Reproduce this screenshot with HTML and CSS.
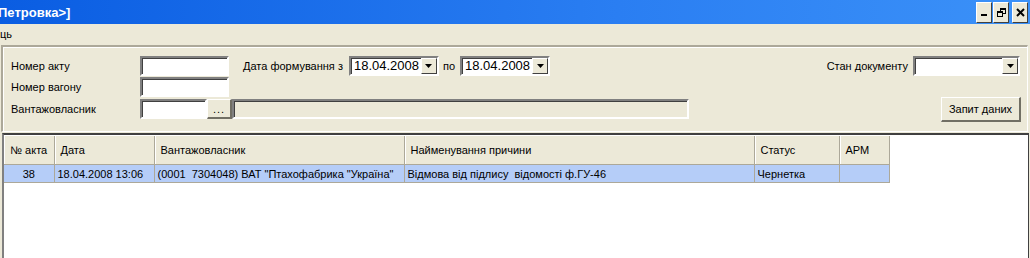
FILE: index.html
```html
<!DOCTYPE html>
<html lang="uk">
<head>
    <meta charset="UTF-8">
    <title>Петровка</title>
    <link rel="stylesheet" href="styles.css">
</head>
<body>

<div class="window">
    <!-- Title bar -->
    <div class="titlebar">
        <span class="title">Петровка&gt;]</span>
        <div class="caption-btns">
            <span class="cap-btn">
                <svg width="9" height="9" viewBox="0 0 9 9"><rect x="1" y="6" width="6" height="2" fill="#000"/></svg>
            </span>
            <span class="cap-btn">
                <svg width="9" height="9" viewBox="0 0 9 9" fill="none" stroke="#000">
                    <rect x="3.5" y="0.5" width="5" height="5"/><line x1="3" y1="1.5" x2="9" y2="1.5"/>
                    <rect x="0.5" y="3.5" width="5" height="5" fill="#ECE9D8"/><line x1="0" y1="4.5" x2="6" y2="4.5"/>
                </svg>
            </span>
            <span class="cap-btn close">
                <svg width="9" height="9" viewBox="0 0 9 9" stroke="#000" stroke-width="2"><line x1="1" y1="1" x2="8" y2="8"/><line x1="8" y1="1" x2="1" y2="8"/></svg>
            </span>
        </div>
    </div>

    <!-- Menu -->
    <div class="menubar">ць</div>

    <!-- Filter panel -->
    <div class="filters">
        <div class="frow">
            <span class="lbl">Номер акту</span>
            <span class="edit w-act"></span>
            <span class="lbl-date">Дата формування з</span>
            <span class="combo date">18.04.2008<span class="drop"><svg width="7" height="4" viewBox="0 0 7 4"><path d="M0 0H7L3.5 4Z" fill="#000"/></svg></span></span>
            <span class="lbl-po">по</span>
            <span class="combo date">18.04.2008<span class="drop"><svg width="7" height="4" viewBox="0 0 7 4"><path d="M0 0H7L3.5 4Z" fill="#000"/></svg></span></span>
            <span class="spacer"></span>
            <span class="lbl-state">Стан документу</span>
            <span class="combo state"><span class="drop"><svg width="7" height="4" viewBox="0 0 7 4"><path d="M0 0H7L3.5 4Z" fill="#000"/></svg></span></span>
        </div>
        <div class="frow">
            <span class="lbl">Номер вагону</span>
            <span class="edit w-act"></span>
        </div>
        <div class="frow last">
            <span class="lbl">Вантажовласник</span>
            <span class="edit w-owner"></span>
            <span class="btn dots">...</span>
            <span class="edit disabled w-name"></span>
            <span class="spacer"></span>
            <span class="btn query">Запит даних</span>
        </div>
    </div>

    <!-- Result grid -->
    <div class="grid">
        <table>
            <colgroup>
                <col style="width: 50px">
                <col style="width: 100px">
                <col style="width: 250px">
                <col style="width: 350px">
                <col style="width: 85px">
                <col style="width: 50px">
            </colgroup>
            <thead>
                <tr>
                    <th class="center">№ акта</th>
                    <th>Дата</th>
                    <th>Вантажовласник</th>
                    <th>Найменування причини</th>
                    <th>Статус</th>
                    <th>АРМ</th>
                </tr>
            </thead>
            <tbody>
                <tr class="selected">
                    <td class="center">38</td>
                    <td>18.04.2008 13:06</td>
                    <td>(0001&nbsp; 7304048) ВАТ "Птахофабрика "Україна"</td>
                    <td>Відмова від підлису&nbsp; відомості ф.ГУ-46</td>
                    <td>Чернетка</td>
                    <td></td>
                </tr>
            </tbody>
        </table>
    </div>
</div>

</body>
</html>
```

FILE: styles.css
```css
/* Page */
html, body {
    margin: 0;
    padding: 0;
}

body {
    width: 1030px;
    height: 258px;
    overflow: hidden;
    background-color: #ECE9D8;
    font-family: "Liberation Sans", Arial, sans-serif;
    font-size: 11px;
    color: #000;
}

.window {
    display: flex;
    flex-direction: column;
    height: 258px;
}

/* Title bar */
.titlebar {
    height: 24px;
    display: flex;
    align-items: center;
    justify-content: space-between;
    background: linear-gradient(to right, #0A5DE2, #2A7EF2 60%, #3B91F8);
}

.title {
    color: #fff;
    font-size: 13px;
    font-weight: bold;
    margin-left: -2px;
}

.caption-btns {
    display: flex;
    align-items: center;
    padding-right: 2px;
}

.cap-btn {
    width: 14px;
    height: 19px;
    margin-left: 1px;
    display: flex;
    align-items: center;
    justify-content: center;
    background-color: #ECE9D8;
    border-style: solid;
    border-width: 1px;
    border-color: #fff #404040 #404040 #fff;
}

.cap-btn.close {
    margin-left: 3px;
}

/* Menu bar */
.menubar {
    height: 20px;
    line-height: 21px;
}

/* Filter panel */
.filters {
    margin: 1px 2px 0 1px;
    height: 76px;
    padding: 8px 0 0 8px;
    border-style: solid;
    border-width: 2px 1px 1px 2px;
    border-color: #ACA899 #fff #fff #ACA899;
    box-shadow: inset 1px 1px 0 #fff;
}

.frow {
    display: flex;
    align-items: center;
    height: 21px;
}

.frow.last {
    height: 24px;
}

.lbl {
    width: 129px;
}

.edit {
    height: 16px;
    background-color: #fff;
    border-style: solid;
    border-width: 2px;
    border-color: #808080 #fff #fff #808080;
    box-shadow: inset 1px 1px 0 #404040;
}

.w-act {
    width: 85px;
}

.w-owner {
    width: 63px;
}

.w-name {
    width: 453px;
}

.edit.disabled {
    background-color: #ECE9D8;
}

.lbl-date {
    margin-left: 14px;
    margin-right: 6px;
}

.lbl-po {
    margin: 0 5px 0 4px;
}

.lbl-state {
    margin-right: 5px;
}

/* Combo boxes */
.combo {
    height: 16px;
    display: flex;
    align-items: center;
    padding-left: 3px;
    background-color: #fff;
    border-style: solid;
    border-width: 2px;
    border-color: #808080 #fff #fff #808080;
    box-shadow: inset 1px 1px 0 #404040;
    font-size: 13px;
}

.combo.date {
    width: 83px;
}

.combo.state {
    width: 100px;
    margin-right: 7px;
}

.drop {
    width: 16px;
    height: 16px;
    margin-left: auto;
    display: flex;
    align-items: center;
    justify-content: center;
    background-color: #ECE9D8;
    border-style: solid;
    border-width: 1px;
    border-color: #fff #404040 #404040 #fff;
    box-sizing: border-box;
}

.spacer {
    flex: 1;
}

/* Buttons */
.btn {
    display: flex;
    align-items: center;
    justify-content: center;
    background-color: #ECE9D8;
    border-style: solid;
    border-width: 1px 2px 2px 1px;
    border-color: #fff #716F64 #716F64 #fff;
}

.btn.dots {
    width: 22px;
    height: 17px;
    letter-spacing: 1px;
}

.btn.query {
    width: 77px;
    height: 22px;
    margin-right: 6px;
}

/* Grid */
.grid {
    flex: 1;
    margin: 1px 1px 0 2px;
    background-color: #fff;
    border-style: solid;
    border-width: 2px 1px 0 2px;
    border-color: #404040 #404040 #404040 #808080;
}

.grid table {
    border-collapse: collapse;
    table-layout: fixed;
    width: 885px;
    margin-top: 1px;
}

.grid th {
    height: 28px;
    padding: 0 6px;
    font-weight: normal;
    text-align: left;
    background-color: #ECE9D8;
    border-right: 1px solid #ACA899;
    border-bottom: 1px solid #ACA899;
    box-shadow: inset 1px 0 0 #fff;
}

.grid td {
    height: 17px;
    padding: 0 3px;
    white-space: nowrap;
    overflow: hidden;
    border-right: 1px solid #ACA899;
    border-bottom: 1px solid #ACA899;
}

.grid th.center, .grid td.center {
    text-align: center;
}

.grid tr.selected td {
    background-color: #B5CDF8;
}
```
